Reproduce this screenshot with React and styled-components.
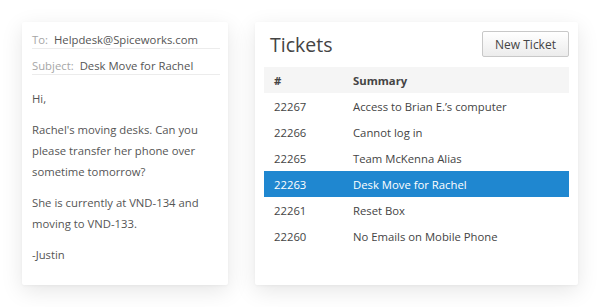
import React from "react";
import styled, { createGlobalStyle } from "styled-components";

const GlobalStyle = createGlobalStyle`
  html, body {
    margin: 0;
    padding: 0;
    background: #ffffff;
  }
  body {
    font-family: "Open Sans", "Liberation Sans", sans-serif;
    -webkit-font-smoothing: antialiased;
  }
`;

const Page = styled.div`
  display: flex;
  align-items: flex-start;
  gap: 27px;
  padding: 22px 0 0 22px;
  width: 600px;
  height: 307px;
  box-sizing: border-box;
`;

const Card = styled.div`
  background: #fff;
  height: 263px;
  box-sizing: border-box;
  border-radius: 2px;
  box-shadow: 0 6px 22px rgba(0, 0, 0, 0.1), 0 1px 3px rgba(0, 0, 0, 0.04);
`;

const EmailCard = styled(Card)`
  width: 206px;
  padding: 1px 8px 0 10px;
`;

const Field = styled.div`
  display: flex;
  gap: 6px;
  padding-top: 9px;
  line-height: 16px;
  font-size: 11.3px;
  border-bottom: 1px solid #ececec;
  white-space: nowrap;
`;

const Label = styled.span`
  color: #a6a6a6;
`;

const Value = styled.span`
  color: #555;
`;

const Body = styled.div`
  margin-top: 13px;
  font-size: 11.3px;
  line-height: 21px;
  color: #555;

  p {
    margin: 0 0 10px;
  }
`;

const TicketsCard = styled(Card)`
  width: 323px;
  padding: 9px 9px 0 9px;
`;

const TopBar = styled.div`
  display: flex;
  align-items: center;
  justify-content: space-between;
  padding-left: 6px;
  height: 26px;
  margin-bottom: 10px;
`;

const Title = styled.h2`
  margin: 0;
  font-weight: 400;
  font-size: 19.5px;
  color: #444;
`;

const Button = styled.button`
  height: 26px;
  width: 87px;
  padding: 0;
  font-family: inherit;
  font-size: 12px;
  color: #444;
  border: 1px solid #c8c8c8;
  border-radius: 2px;
  background: linear-gradient(#ffffff, #ececec);
`;

const Table = styled.div`
  display: flex;
  flex-direction: column;
`;

const Row = styled.div`
  display: grid;
  grid-template-columns: 89px 1fr;
  height: 26px;
  align-items: center;
  font-size: 11.3px;
  color: ${({ $selected }) => ($selected ? "#fff" : "#444")};
  background: ${({ $selected, $head }) =>
    $selected ? "#1f87d0" : $head ? "#f5f5f5" : "transparent"};
  font-weight: ${({ $head }) => ($head ? 700 : 400)};

  span:first-child {
    padding-left: 10px;
  }
`;

const tickets = [
  ["22267", "Access to Brian E.’s computer"],
  ["22266", "Cannot log in"],
  ["22265", "Team McKenna Alias"],
  ["22263", "Desk Move for Rachel", true],
  ["22261", "Reset Box"],
  ["22260", "No Emails on Mobile Phone"],
];

export default function App() {
  return (
    <>
      <GlobalStyle />
      <Page>
        <EmailCard>
          <Field>
            <Label>To:</Label>
            <Value>Helpdesk@Spiceworks.com</Value>
          </Field>
          <Field>
            <Label>Subject:</Label>
            <Value>Desk Move for Rachel</Value>
          </Field>
          <Body>
            <p>Hi,</p>
            <p>Rachel's moving desks. Can you please transfer her phone over sometime tomorrow?</p>
            <p>She is currently at VND-134 and moving to VND-133.</p>
            <p>-Justin</p>
          </Body>
        </EmailCard>
        <TicketsCard>
          <TopBar>
            <Title>Tickets</Title>
            <Button>New Ticket</Button>
          </TopBar>
          <Table>
            <Row $head>
              <span>#</span>
              <span>Summary</span>
            </Row>
            {tickets.map(([id, summary, selected]) => (
              <Row key={id} $selected={selected}>
                <span>{id}</span>
                <span>{summary}</span>
              </Row>
            ))}
          </Table>
        </TicketsCard>
      </Page>
    </>
  );
}
